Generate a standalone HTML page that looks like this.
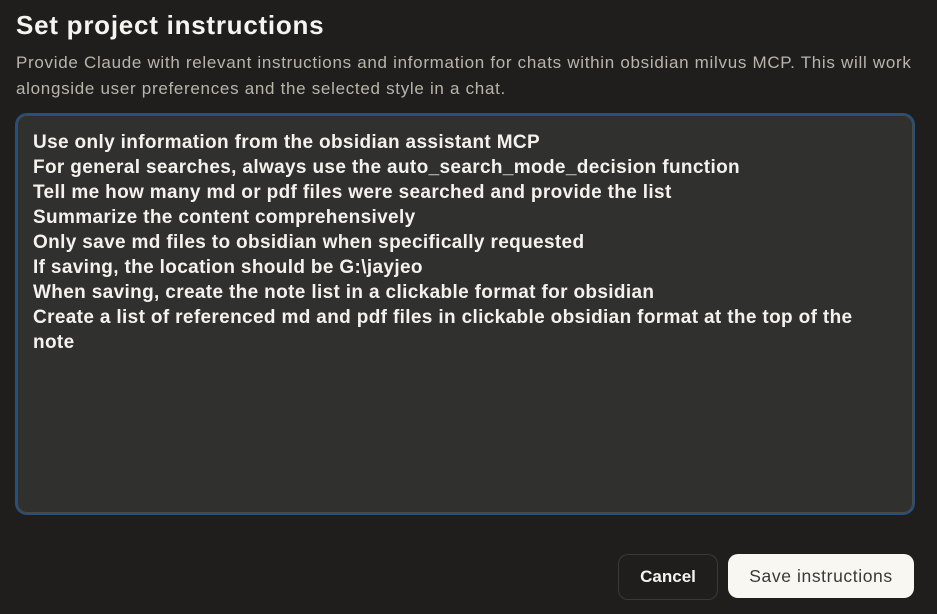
<!DOCTYPE html>
<html><head><style>
body{margin:0;width:937px;height:614px;background:#1f1e1d;font-family:"Liberation Sans",sans-serif;overflow:hidden;position:relative}
h1{position:absolute;left:16px;top:10px;margin:0;font-size:26px;font-weight:bold;color:#f5f4ef;letter-spacing:0.75px}
.desc{position:absolute;left:16px;top:50px;width:915px;font-size:17px;line-height:26px;color:#b8b5ab;letter-spacing:0.7px}
.ta{position:absolute;left:15px;top:113px;width:896px;height:398px;background:#30302e;border:2px solid #24517f;border-radius:12px;box-shadow:inset 0 0 0 1px #4a4944}
.txt{position:absolute;left:33px;top:130px;width:850px;font-size:19px;line-height:25px;color:#f3f2ed;font-weight:bold;letter-spacing:0.35px}
.btn{position:absolute;top:554px;height:44px;border-radius:10px;font-size:17px;font-weight:bold;display:flex;align-items:center;justify-content:center}
.c{left:618px;width:98px;border:1px solid #3a3935;color:#f3f2ed}
.s{left:728px;width:186px;background:#f8f7f2;color:#3a3935;font-weight:normal;letter-spacing:0.6px;font-size:17.5px}
</style></head><body>
<h1>Set project instructions</h1>
<div class="desc">Provide Claude with relevant instructions and information for chats within obsidian milvus MCP. This will work alongside user preferences and the selected style in a chat.</div>
<div class="ta"></div>
<div class="txt">Use only information from the obsidian assistant MCP<br>For general searches, always use the auto_search_mode_decision function<br>Tell me how many md or pdf files were searched and provide the list<br>Summarize the content comprehensively<br>Only save md files to obsidian when specifically requested<br>If saving, the location should be G:\jayjeo<br>When saving, create the note list in a clickable format for obsidian<br>Create a list of referenced md and pdf files in clickable obsidian format at the top of the note</div>
<div class="btn c">Cancel</div>
<div class="btn s">Save instructions</div>
</body></html>
